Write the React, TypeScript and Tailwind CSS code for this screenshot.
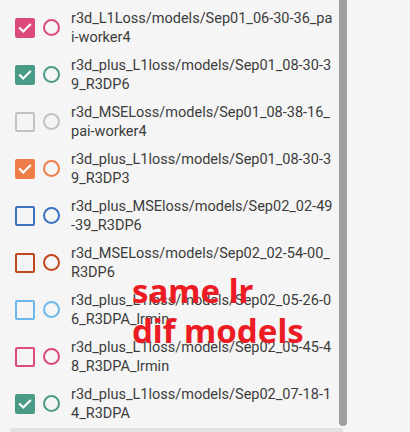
import React from 'react';

interface Run {
  line1: string;
  line2: string;
  color: string;
  checked: boolean;
}

const runs: Run[] = [
  { line1: 'r3d_L1Loss/models/Sep01_06-30-36_pa', line2: 'i-worker4', color: '#dc4a7a', checked: true },
  { line1: 'r3d_plus_L1loss/models/Sep01_08-30-3', line2: '9_R3DP6', color: '#4a9a88', checked: true },
  { line1: 'r3d_MSELoss/models/Sep01_08-38-16_', line2: 'pai-worker4', color: '#c2c2c2', checked: false },
  { line1: 'r3d_plus_L1loss/models/Sep01_08-30-3', line2: '9_R3DP3', color: '#ef7d4a', checked: true },
  { line1: 'r3d_plus_MSEloss/models/Sep02_02-49', line2: '-39_R3DP6', color: '#3a72c0', checked: false },
  { line1: 'r3d_MSELoss/models/Sep02_02-54-00_', line2: 'R3DP6', color: '#c0461c', checked: false },
  { line1: 'r3d_plus_L1loss/models/Sep02_05-26-0', line2: '6_R3DPA_lrmin', color: '#6cb8ee', checked: false },
  { line1: 'r3d_plus_L1loss/models/Sep02_05-45-4', line2: '8_R3DPA_lrmin', color: '#dc4a7a', checked: false },
  { line1: 'r3d_plus_L1loss/models/Sep02_07-18-1', line2: '4_R3DPA', color: '#4a9a88', checked: true },
];

const CheckBox: React.FC<{ color: string; checked: boolean }> = ({ color, checked }) => {
  if (checked) {
    return (
      <div className="w-5 h-5 rounded-[2px] flex items-center justify-center shrink-0" style={{ backgroundColor: color }}>
        <svg width="16" height="16" viewBox="0 0 16 16" fill="none">
          <path d="M3 8.3l3.2 3.2L13 4.7" stroke="#fff" strokeWidth="2.2" strokeLinecap="square" />
        </svg>
      </div>
    );
  }
  return <div className="w-5 h-5 rounded-[2px] border-2 shrink-0" style={{ borderColor: color }} />;
};

export default function App() {
  return (
    <div className="relative w-[410px] h-[432px] bg-[#f5f5f5] overflow-hidden font-['Roboto',sans-serif]">
      <div className="flex h-[428px]">
        <div className="w-[339px] pt-[4px] overflow-hidden">
          {runs.map((run, i) => (
            <div key={i} className="h-[47px] flex items-center pl-[15px]">
              <CheckBox color={run.color} checked={run.checked} />
              <div
                className="w-[17px] h-[17px] rounded-full border-2 ml-[8px] shrink-0"
                style={{ borderColor: run.color }}
              />
              <div className="ml-[11px] text-[14.5px] leading-[19px] text-[#3c3c3c] whitespace-nowrap">
                <div>{run.line1}</div>
                <div>{run.line2}</div>
              </div>
            </div>
          ))}
        </div>
        <div className="w-[8px] h-[426px] bg-[#9e9e9e] rounded-b-[4px]" />
      </div>
      <div className="ml-[10px] w-[333px] h-[4px] bg-[#e2e2e2] rounded-tl-[2px]" />

      <div className="absolute left-[132px] top-[271px] text-[#ed1c24] font-['Noto_Sans',sans-serif] font-bold text-[33px] leading-[40px]">
        <div>same lr</div>
        <div>dif models</div>
      </div>
    </div>
  );
}
